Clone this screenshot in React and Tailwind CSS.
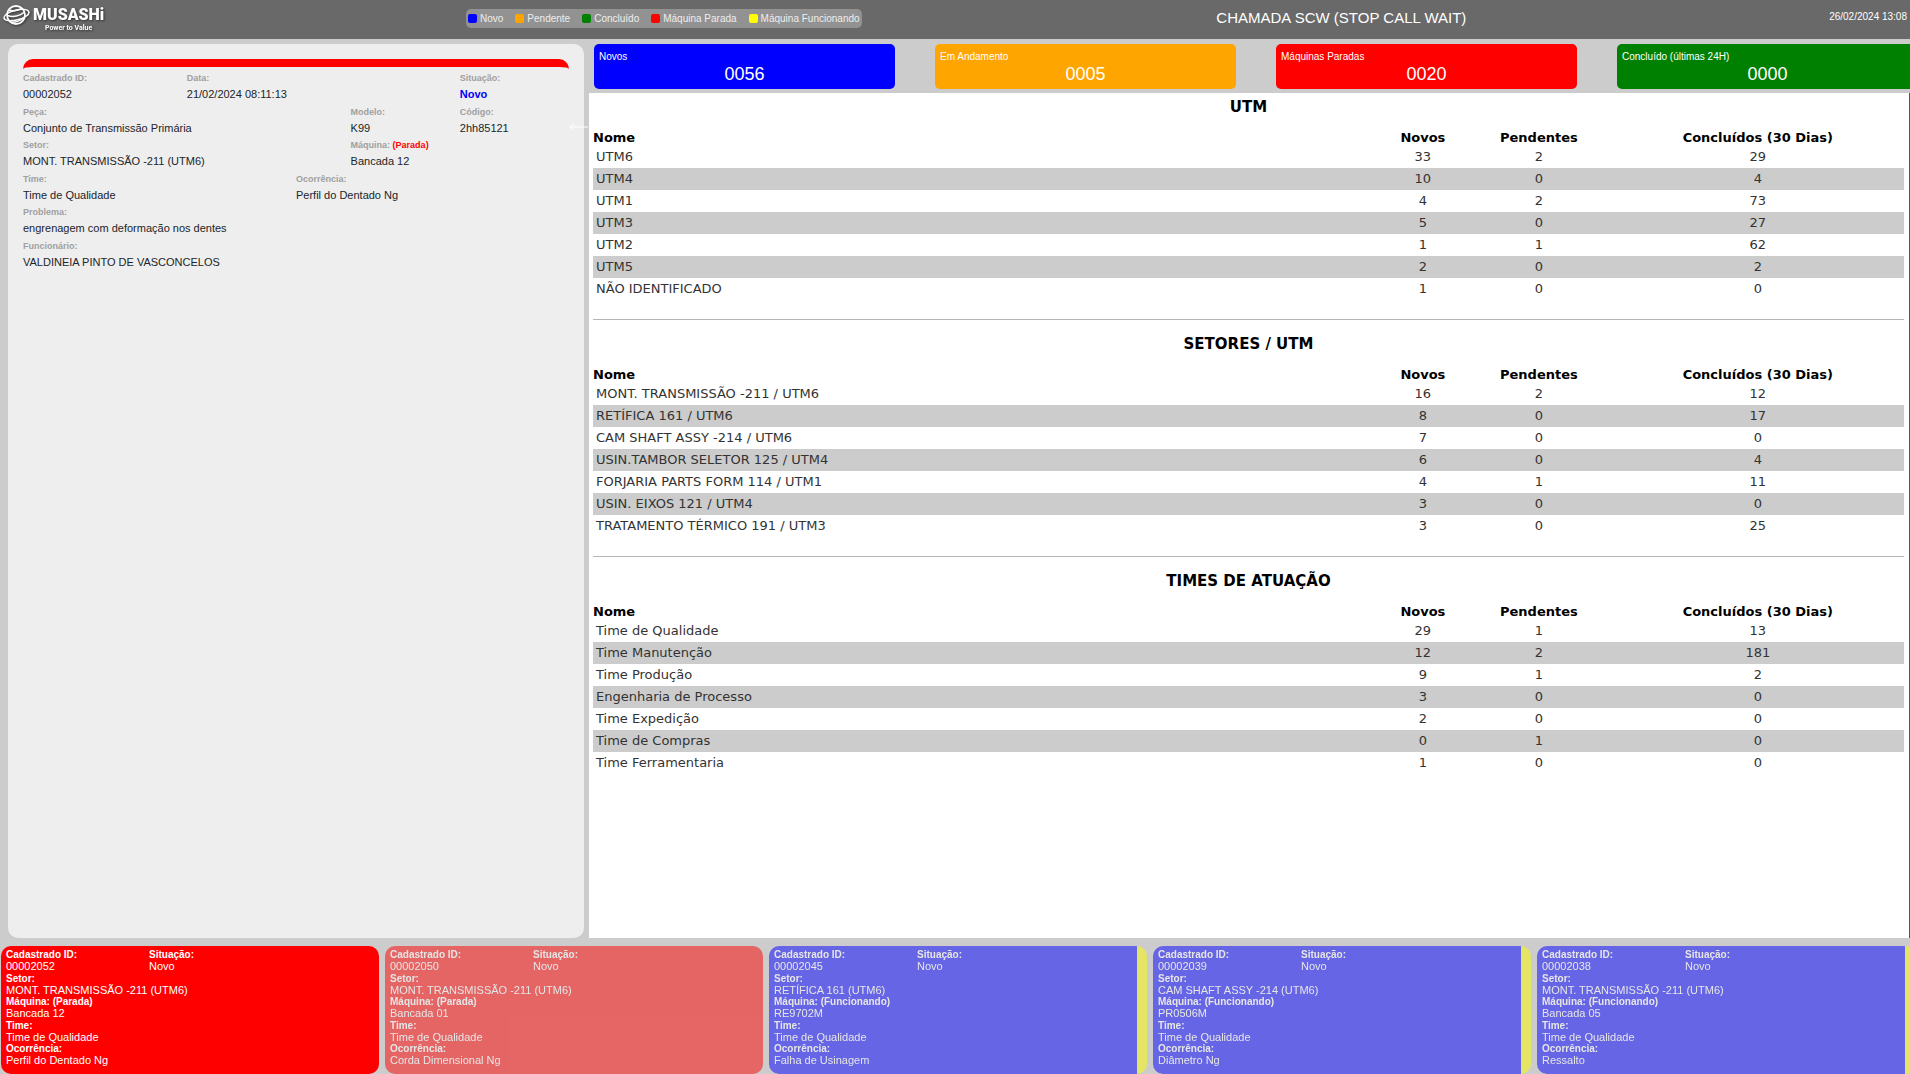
const legend = [
  { label: 'Novo', color: 'bg-[#0000ff]' },
  { label: 'Pendente', color: 'bg-[#ffa500]' },
  { label: 'Concluído', color: 'bg-[#008000]' },
  { label: 'Máquina Parada', color: 'bg-[#ff0000]' },
  { label: 'Máquina Funcionando', color: 'bg-[#ffff00]' },
];

const totals = [
  { label: 'Novos', value: '0056', color: 'bg-[#0000ff]' },
  { label: 'Em Andamento', value: '0005', color: 'bg-[#ffa500]' },
  { label: 'Máquinas Paradas', value: '0020', color: 'bg-[#ff0000]' },
  { label: 'Concluído (últimas 24H)', value: '0000', color: 'bg-[#008000]' },
];

const sections = [
  {
    title: 'UTM',
    rows: [
      ['UTM6', 33, 2, 29],
      ['UTM4', 10, 0, 4],
      ['UTM1', 4, 2, 73],
      ['UTM3', 5, 0, 27],
      ['UTM2', 1, 1, 62],
      ['UTM5', 2, 0, 2],
      ['NÃO IDENTIFICADO', 1, 0, 0],
    ],
  },
  {
    title: 'SETORES / UTM',
    rows: [
      ['MONT. TRANSMISSÃO -211 / UTM6', 16, 2, 12],
      ['RETÍFICA 161 / UTM6', 8, 0, 17],
      ['CAM SHAFT ASSY -214 / UTM6', 7, 0, 0],
      ['USIN.TAMBOR SELETOR 125 / UTM4', 6, 0, 4],
      ['FORJARIA PARTS FORM 114 / UTM1', 4, 1, 11],
      ['USIN. EIXOS 121 / UTM4', 3, 0, 0],
      ['TRATAMENTO TÉRMICO 191 / UTM3', 3, 0, 25],
    ],
  },
  {
    title: 'TIMES DE ATUAÇÃO',
    rows: [
      ['Time de Qualidade', 29, 1, 13],
      ['Time Manutenção', 12, 2, 181],
      ['Time Produção', 9, 1, 2],
      ['Engenharia de Processo', 3, 0, 0],
      ['Time Expedição', 2, 0, 0],
      ['Time de Compras', 0, 1, 0],
      ['Time Ferramentaria', 1, 0, 0],
    ],
  },
];

const calls = [
  { id: '00002052', sector: 'MONT. TRANSMISSÃO -211 (UTM6)', stopped: true, machine: 'Bancada 12', issue: 'Perfil do Dentado Ng', current: true },
  { id: '00002050', sector: 'MONT. TRANSMISSÃO -211 (UTM6)', stopped: true, machine: 'Bancada 01', issue: 'Corda Dimensional Ng' },
  { id: '00002045', sector: 'RETÍFICA 161 (UTM6)', stopped: false, machine: 'RE9702M', issue: 'Falha de Usinagem' },
  { id: '00002039', sector: 'CAM SHAFT ASSY -214 (UTM6)', stopped: false, machine: 'PR0506M', issue: 'Diâmetro Ng' },
  { id: '00002038', sector: 'MONT. TRANSMISSÃO -211 (UTM6)', stopped: false, machine: 'Bancada 05', issue: 'Ressalto' },
];

function Logo() {
  return (
    <div className="flex items-start gap-[3px] pt-1 pl-[3px] text-white drop-shadow-[1px_1px_1px_#333333]">
      <svg viewBox="0 0 27 22" className="h-[22px] w-[27px]" fill="none" stroke="currentColor" aria-hidden="true">
        <circle cx="13" cy="11" r="9" strokeWidth="1.8" />
        <ellipse cx="13.5" cy="11" rx="12.8" ry="5" strokeWidth="1.5" transform="rotate(-14 13.5 11)" />
        <path d="M6 6C10 7.600 16 6.600 19 4" strokeWidth="1.4" />
        <path d="M4.500 11.500C10 13.500 17.500 12 21.500 8" strokeWidth="1.5" />
        <path d="M7 18C12 19 18 17 21 13.500" strokeWidth="1.4" />
      </svg>
      <div className="flex flex-col items-center pt-[2px] font-['Roboto',sans-serif]">
        <span className="text-[16px] leading-[18px] font-black">MUSASHi</span>
        <span className="text-[7px] leading-[8px] font-bold">Power to Value</span>
      </div>
    </div>
  );
}

function Field({ label, note, value, span, highlight }) {
  return (
    <div className={span}>
      <dt className="text-[9px] leading-[14px] font-bold text-[#a0a0a0]">
        {label}
        {note && <span className="text-[#ff0000]"> {note}</span>}
      </dt>
      <dd className={highlight ? 'text-[11px] leading-[18px] font-bold text-[#0000ff]' : 'text-[11px] leading-[18px] text-[#212529]'}>{value}</dd>
    </div>
  );
}

function CallDetail() {
  return (
    <section className="relative ml-2 w-[576px] shrink-0 rounded-[10px] bg-[#eeeeee] px-[15px] pt-[15px]">
      <div className="h-[10px] rounded-t-[10px] border-t-8 border-[#ff0000]" />
      <dl className="mt-[2px] grid h-[201px] grid-cols-10 grid-rows-6">
        <Field span="col-span-3" label="Cadastrado ID:" value="00002052" />
        <Field span="col-span-5" label="Data:" value="21/02/2024 08:11:13" />
        <Field span="col-span-2" label="Situação:" value="Novo" highlight />
        <Field span="col-span-6" label="Peça:" value="Conjunto de Transmissão Primária" />
        <Field span="col-span-2" label="Modelo:" value="K99" />
        <Field span="col-span-2" label="Código:" value="2hh85121" />
        <Field span="col-span-6" label="Setor:" value="MONT. TRANSMISSÃO -211 (UTM6)" />
        <Field span="col-span-4" label="Máquina:" note="(Parada)" value="Bancada 12" />
        <Field span="col-span-5" label="Time:" value="Time de Qualidade" />
        <Field span="col-span-5" label="Ocorrência:" value="Perfil do Dentado Ng" />
        <Field span="col-span-10" label="Problema:" value="engrenagem com deformação nos dentes" />
        <Field span="col-span-10" label="Funcionário:" value="VALDINEIA PINTO DE VASCONCELOS" />
      </dl>
      <button type="button" aria-label="Recolher" className="absolute top-[78px] -right-1 text-white">
        <svg viewBox="0 0 19 10" className="h-[10px] w-[19px]" fill="none" stroke="currentColor" strokeWidth="1">
          <path d="M19 5H1M5 1.500L1 5L5 8.500" />
        </svg>
      </button>
    </section>
  );
}

function Ranking({ title, rows }) {
  return (
    <section className="border-b border-[#b4b4b4] pt-[14px] pb-[19px] first:pt-1 last:border-b-0">
      <h2 className="pb-[13px] text-center text-[15px] leading-[20px] font-bold text-black">{title}</h2>
      <table className="w-full table-fixed border-collapse text-[13px]">
        <colgroup>
          <col className="w-[60%]" />
          <col className="w-[6.6%]" />
          <col className="w-[11.1%]" />
          <col className="w-[22.3%]" />
        </colgroup>
        <thead>
          <tr className="h-[16px] leading-[16px] text-black">
            <th className="p-0 text-left">Nome</th>
            <th className="p-0">Novos</th>
            <th className="p-0">Pendentes</th>
            <th className="p-0">Concluídos (30 Dias)</th>
          </tr>
        </thead>
        <tbody>
          {rows.map(([name, ...values]) => (
            <tr key={name} className="h-[22px] text-[#333333] even:bg-[#cccccc]">
              <td className="py-0 pr-0 pl-[3px] leading-[22px]">{name}</td>
              {values.map((value, i) => (
                <td key={i} className="p-0 text-center leading-[22px]">{value}</td>
              ))}
            </tr>
          ))}
        </tbody>
      </table>
    </section>
  );
}

function CardField({ label, value, className }) {
  return (
    <div className={className}>
      <dt className="text-[10px] leading-[12px] font-bold">{label}</dt>
      <dd className="text-[11px] leading-[11px]">{value}</dd>
    </div>
  );
}

function CallCard({ call }) {
  const tone = call.stopped
    ? 'bg-[#ff0000]'
    : 'bg-[#0000ff] border-r-10 border-[#ffff00]';
  return (
    <article className={`${tone} ${call.current ? '' : 'opacity-50'} h-[128px] w-[378px] shrink-0 rounded-[10px] pt-[3px] pl-[5px] text-white`}>
      <dl className="grid h-[118px] grid-rows-5">
        <div className="flex">
          <CardField className="w-[143px]" label="Cadastrado ID:" value={call.id} />
          <CardField label="Situação:" value="Novo" />
        </div>
        <CardField label="Setor:" value={call.sector} />
        <CardField label={call.stopped ? 'Máquina: (Parada)' : 'Máquina: (Funcionando)'} value={call.machine} />
        <CardField label="Time:" value="Time de Qualidade" />
        <CardField label="Ocorrência:" value={call.issue} />
      </dl>
    </article>
  );
}

export default function App() {
  return (
    <div className="flex min-h-screen flex-col overflow-hidden bg-[#cccccc] font-['Liberation_Sans',Arial,sans-serif]">
      <header className="flex h-[39px] bg-[#696969]">
        <div className="w-[466px]">
          <Logo />
        </div>
        <ul className="mt-[9px] flex h-[19px] items-center gap-3 rounded-[5px] bg-[#929292] px-[2px] text-[10px] text-[#eeeeee]">
          {legend.map((item) => (
            <li key={item.label} className="flex items-center gap-[3px]">
              <span className={`${item.color} size-[9px] rounded-[2px]`} />
              {item.label}
            </li>
          ))}
        </ul>
        <h1 className="flex-1 pt-[6px] text-center text-[15px] leading-[24px] text-white">CHAMADA SCW (STOP CALL WAIT)</h1>
        <time className="pt-[9px] pr-[3px] pl-2 text-[10px] leading-[15px] text-white">26/02/2024 13:08</time>
      </header>

      <main className="flex flex-1 pt-[5px]">
        <CallDetail />
        <div className="ml-[5px] flex min-w-0 flex-1 flex-col">
          <div className="flex gap-10 pl-[5px]">
            {totals.map((item) => (
              <div key={item.label} className={`${item.color} h-[45px] w-[301px] shrink-0 rounded-[5px] px-[5px] pt-[6px] text-white`}>
                <p className="text-[10px] leading-[14px]">{item.label}</p>
                <p className="text-center text-[18px] leading-[20px]">{item.value}</p>
              </div>
            ))}
          </div>
          <div className="mt-1 flex-1 border-r border-[#555555] bg-white pr-[5px] pl-1 font-['DejaVu_Sans',Verdana,sans-serif]">
            {sections.map((section) => (
              <Ranking key={section.title} title={section.title} rows={section.rows} />
            ))}
          </div>
        </div>
      </main>

      <footer className="mt-2 flex gap-[6px] pl-px">
        {calls.map((call) => (
          <CallCard key={call.id} call={call} />
        ))}
      </footer>
    </div>
  );
}
